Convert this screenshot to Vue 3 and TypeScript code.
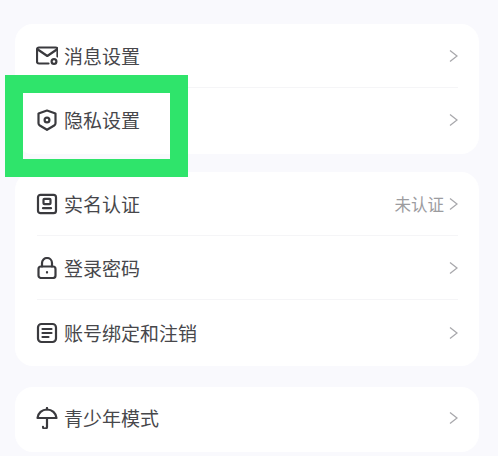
<script setup lang="ts">
interface Row { label: string; icon: string; status?: string }
const groups: Row[][] = [
  [
    { label: '消息设置', icon: 'mail' },
    { label: '隐私设置', icon: 'shield' }
  ],
  [
    { label: '实名认证', icon: 'id', status: '未认证' },
    { label: '登录密码', icon: 'lock' },
    { label: '账号绑定和注销', icon: 'doc' }
  ],
  [{ label: '青少年模式', icon: 'umbrella' }]
]
</script>

<template>
  <main class="page">
    <section v-for="(group, g) in groups" :key="g" class="card" :class="`card-${g}`">
      <div v-for="row in group" :key="row.label" class="row">
        <svg class="icon" viewBox="0 0 22 22" fill="none" stroke="#3a3a3e" stroke-width="2.2" stroke-linecap="round" stroke-linejoin="round">
          <template v-if="row.icon === 'mail'">
            <path d="M12.500 18.500H3a2 2 0 0 1-2-2V4.500a2 2 0 0 1 2-2h16.500a2 2 0 0 1 2 2v7" />
            <path d="M1.800 4.500l9.500 6.500 9.500-6.500" />
            <circle cx="18" cy="16.500" r="2.400" />
          </template>
          <template v-else-if="row.icon === 'shield'">
            <path d="M11 1.500l8.500 3v9.800c0 1-.5 1.700-1.300 2.200L11 20.800l-7.200-4.300c-.8-.5-1.300-1.200-1.300-2.200V4.500z" />
            <circle cx="11" cy="11" r="2.400" />
          </template>
          <template v-else-if="row.icon === 'id'">
            <rect x="2" y="1.800" width="18" height="18.400" rx="2.500" />
            <rect x="7.500" y="5.800" width="7" height="5.400" rx="1" />
            <path d="M7 15.200h8" />
          </template>
          <template v-else-if="row.icon === 'lock'">
            <rect x="2.500" y="9.500" width="17" height="11.500" rx="2.500" />
            <path d="M6 9.500V6a5 5 0 0 1 10 0v3.500" />
            <path d="M11 15v.6" />
          </template>
          <template v-else-if="row.icon === 'doc'">
            <rect x="2" y="2" width="18" height="18" rx="3.500" />
            <path d="M6.500 7h9M6.500 11h9M6.500 15h6" />
          </template>
          <template v-else>
            <path d="M1.500 11C2 5.800 6 2.500 11 2.500S20 5.800 20.500 11z" />
            <path d="M11 1v1.500M11 11v8.500a2 2 0 0 1-4 .3" />
          </template>
        </svg>
        <span class="label">{{ row.label }}</span>
        <span v-if="row.status" class="status">{{ row.status }}</span>
        <svg class="chev" viewBox="0 0 9 14" fill="none" stroke="#a8a8ac" stroke-width="1.300">
          <path d="M1 1.500L8 7l-7 5.500" />
        </svg>
      </div>
    </section>
    <div class="frame" aria-hidden="true"></div>
  </main>
</template>

<style scoped>
.page {
  position: relative;
  width: 498px;
  height: 456px;
  overflow: hidden;
  background: #f9f9fd;
  padding: 24px 19px 0 15px;
  box-sizing: border-box;
  font-family: "Noto Sans CJK SC", "Noto Sans", sans-serif;
  display: flex;
  flex-direction: column;
}
.card {
  background: #ffffff;
  border-radius: 18px;
  padding: 0 21px 0 22px;
}
.card-0 {
  height: 130px;
  margin-bottom: 18px;
}
.card-1 {
  height: 194px;
  margin-bottom: 21px;
}
.card-2 {
  height: 65px;
}
.row {
  height: 64px;
  display: flex;
  align-items: center;
  box-sizing: border-box;
  border-bottom: 1.5px solid #f5f5f7;
}
.row:last-child {
  border-bottom: none;
}
.card-1 .row {
  padding-top: 1px;
}
.card-2 .row {
  height: 62px;
}
.icon {
  width: 22px;
  height: 22px;
  margin-left: -1px;
  margin-right: 6px;
  flex: none;
}
.label {
  font-size: 19px;
  line-height: 26px;
  color: #47474b;
  flex: 1;
}
.status {
  font-size: 16.500px;
  color: #9c9c9f;
  margin-right: 5px;
}
.chev {
  width: 9px;
  height: 14px;
  flex: none;
}
.frame {
  position: absolute;
  left: 5px;
  top: 75px;
  width: 183px;
  height: 102px;
  box-sizing: border-box;
  border: 18.500px solid #2fe46b;
}
</style>
